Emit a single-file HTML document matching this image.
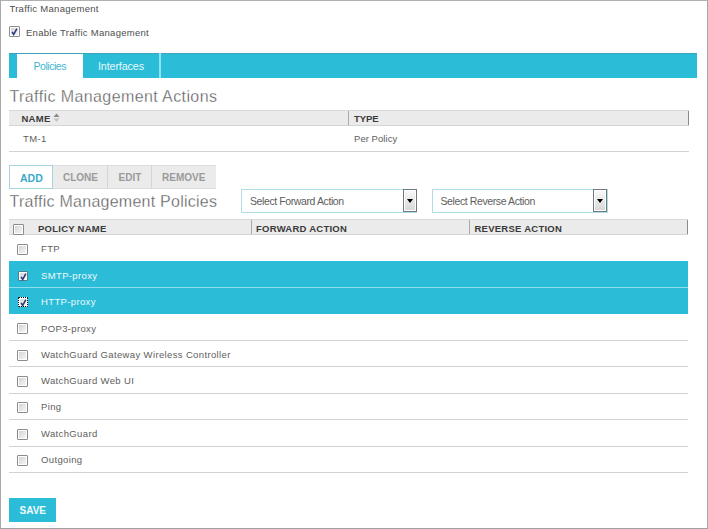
<!DOCTYPE html>
<html><head><meta charset="utf-8">
<style>
*{margin:0;padding:0;box-sizing:border-box}
html,body{width:708px;height:529px;overflow:hidden;background:#fff}
body{position:relative;font-family:"Liberation Sans",sans-serif;color:#555}
.a{position:absolute;white-space:nowrap}
.frame{position:absolute;left:0;top:0;width:708px;height:529px;border-left:1px solid #a8a8a8;border-top:1px solid #b0b0b0;border-right:1px solid #a6a6a6;border-bottom:1px solid #a0a0a0}
.t10{font-size:10px;line-height:10px}
.cb{position:absolute;width:11px;height:11px;border:1px solid #8c8c8c;border-radius:1px;background:linear-gradient(135deg,#d0d0d0 0%,#eeeeee 70%,#fafafa 100%);box-shadow:inset 0 0 0 1px #fff}
.cb svg{position:absolute;left:0;top:0}
.tabbar{position:absolute;left:9px;top:53px;width:688px;height:25px;background:#2bbcd7;border-top:1px solid #3aa3b8}
.tab1{position:absolute;left:17px;top:54px;width:66px;height:24px;background:#fff}
.sep{position:absolute;left:159px;top:53px;width:2px;height:25px;background:#8ee3f5}
.h{font-size:16px;line-height:16px;color:#5a5a5a;-webkit-text-stroke:0.3px #fff;paint-order:normal}
.thead{position:absolute;left:9px;height:16px;background:#ebebeb;border-top:1px solid #d8d8d8;border-bottom:1px solid #d4d4d4}
.th{font-size:9.5px;line-height:10px;font-weight:bold;color:#3a3a3a;letter-spacing:0.25px}
.td{font-size:9.5px;line-height:10px;color:#5e5e5e;letter-spacing:0.36px}
.vl{position:absolute;width:1px;background:#a9a9a9}
.hl{position:absolute;left:9px;width:679px;height:1px;background:#d2d2d2}
.btn{position:absolute;top:165px;height:24px;background:#ebebeb;border-top:1px solid #dedede;border-bottom:1px solid #dedede}
.bt{font-size:10px;line-height:10px;font-weight:bold;color:#9a9a9a}
.sel{position:absolute;top:189px;width:176px;height:24px;border:1px solid #b0dce6;background:#fff}
.dd{position:absolute;top:189px;width:14px;height:23px;border:1px solid #6f7a7e;background:linear-gradient(#fafafa,#d6d6d6);box-shadow:inset 0 0 0 1px #fff}
.dd:after{content:"";position:absolute;left:3px;top:9px;border-left:3.5px solid transparent;border-right:3.5px solid transparent;border-top:4px solid #000}
.st{font-size:10.5px;line-height:10px;color:#5e5e5e;letter-spacing:-0.4px}
.cyan{position:absolute;left:9px;width:679px;background:#2bbcd7}
</style></head><body>
<div class="frame"></div>

<div class="a t10" style="left:9.4px;top:3.6px;color:#4e4e4e;font-size:9.5px;letter-spacing:0.3px">Traffic Management</div>
<div class="cb" style="left:9px;top:26px"><svg width="11" height="11" viewBox="0 0 11 11"><path d="M2 4.9 L3.7 7.4 L6.9 1.7" fill="none" stroke="#2b3b7e" stroke-width="1.6"/></svg></div>
<div class="a t10" style="left:26px;top:27.6px;color:#4e4e4e;font-size:9.5px;letter-spacing:0.28px">Enable Traffic Management</div>

<div class="tabbar"></div>
<div class="tab1"></div>
<div class="sep"></div>
<div class="a t10" style="left:33.5px;top:61px;color:#3fb6d3;font-size:10.6px;letter-spacing:-0.5px">Policies</div>
<div class="a t10" style="left:98px;top:61px;color:#e6f7fb;font-size:10.8px;letter-spacing:-0.15px">Interfaces</div>

<div class="a h" style="left:9.5px;top:89.3px;letter-spacing:0.4px">Traffic Management Actions</div>

<div class="thead" style="top:110px;width:680px;"></div>
<div class="vl" style="left:348px;top:111px;height:14px"></div>
<div class="vl" style="left:688px;top:111px;height:14px;background:#8a8a8a"></div>
<div class="a th" style="left:21.5px;top:114px">NAME</div>
<svg class="a" style="left:53px;top:113px" width="7" height="10" viewBox="0 0 7 10"><path d="M3.5 0.5 L6.5 4 L0.5 4Z" fill="#8a8a8a"/><path d="M0.5 5.5 L6.5 5.5 L3.5 9Z" fill="#c4c4c4"/></svg>
<div class="a th" style="left:354px;top:114px;letter-spacing:-0.1px">TYPE</div>
<div class="a td" style="left:23px;top:134px">TM-1</div>
<div class="a td" style="left:354px;top:134px;letter-spacing:0.05px">Per Policy</div>
<div class="hl" style="top:151px;width:680px"></div>

<div class="btn" style="left:9px;width:44px;background:#fff;border:1px solid #a6d3de"></div>
<div class="btn" style="left:53px;width:55px;border-right:1px solid #d4d4d4"></div>
<div class="btn" style="left:108px;width:44px;border-right:1px solid #d4d4d4"></div>
<div class="btn" style="left:152px;width:64px"></div>
<div class="a bt" style="left:20px;top:172.5px;color:#3aabc8;font-size:10.5px">ADD</div>
<div class="a bt" style="left:63px;top:172.5px">CLONE</div>
<div class="a bt" style="left:118.5px;top:172.5px">EDIT</div>
<div class="a bt" style="left:162px;top:172.5px">REMOVE</div>

<div class="a h" style="left:9.5px;top:193.9px;letter-spacing:0.25px">Traffic Management Policies</div>

<div class="sel" style="left:241px"></div>
<div class="dd" style="left:403px"></div>
<div class="a st" style="left:250px;top:196px">Select Forward Action</div>
<div class="sel" style="left:432px"></div>
<div class="dd" style="left:593px"></div>
<div class="a st" style="left:440.5px;top:196px">Select Reverse Action</div>

<div class="thead" style="top:219px;width:679px;"></div>
<div class="cb" style="left:13px;top:224px"></div>
<div class="vl" style="left:251px;top:220px;height:14px"></div>
<div class="vl" style="left:469px;top:220px;height:14px"></div>
<div class="vl" style="left:687px;top:220px;height:14px;background:#8a8a8a"></div>
<div class="a th" style="left:38px;top:223.5px">POLICY NAME</div>
<div class="a th" style="left:256px;top:223.5px">FORWARD ACTION</div>
<div class="a th" style="left:474.5px;top:223.5px">REVERSE ACTION</div>

<!-- rows -->
<div class="cb" style="left:17px;top:244px"></div>
<div class="a td" style="left:41px;top:244px">FTP</div>

<div class="cyan" style="top:261px;height:26px"></div>
<div class="cyan" style="top:287px;height:1px;background:#8edcec"></div>
<div class="cyan" style="top:288px;height:26px"></div>
<div class="cb" style="left:17.5px;top:270.5px;width:10.5px;height:10.5px;border-color:#4f7f8c"><svg width="11" height="11" viewBox="0 0 11 11"><path d="M2 4.9 L3.7 7.4 L6.9 1.7" fill="none" stroke="#2b3b7e" stroke-width="1.6"/></svg></div>
<div class="a td" style="left:41px;top:270.5px;color:#eefafd">SMTP-proxy</div>
<div class="cb" style="left:17.5px;top:296.5px;width:10.5px;height:10.5px;border:1px dotted #111;"><svg width="11" height="11" viewBox="0 0 11 11"><path d="M2 4.9 L3.7 7.4 L6.9 1.7" fill="none" stroke="#2b3b7e" stroke-width="1.6"/></svg></div>
<div class="a td" style="left:41px;top:296.5px;color:#eefafd">HTTP-proxy</div>

<div class="cb" style="left:17px;top:323px"></div>
<div class="a td" style="left:41px;top:323.5px">POP3-proxy</div>
<div class="hl" style="top:340px"></div>
<div class="cb" style="left:17px;top:350px"></div>
<div class="a td" style="left:41px;top:349.5px">WatchGuard Gateway Wireless Controller</div>
<div class="hl" style="top:366px"></div>
<div class="cb" style="left:17px;top:376px"></div>
<div class="a td" style="left:41px;top:376px">WatchGuard Web UI</div>
<div class="hl" style="top:393px"></div>
<div class="cb" style="left:17px;top:402px"></div>
<div class="a td" style="left:41px;top:402px">Ping</div>
<div class="hl" style="top:419px"></div>
<div class="cb" style="left:17px;top:429px"></div>
<div class="a td" style="left:41px;top:429px">WatchGuard</div>
<div class="hl" style="top:446px"></div>
<div class="cb" style="left:17px;top:455px"></div>
<div class="a td" style="left:41px;top:455px">Outgoing</div>
<div class="hl" style="top:472px"></div>

<div class="a" style="left:9px;top:498px;width:47px;height:24px;background:#2bbcd7"></div>
<div class="a bt" style="left:19.5px;top:505.5px;color:#f2fbfd">SAVE</div>
</body></html>
